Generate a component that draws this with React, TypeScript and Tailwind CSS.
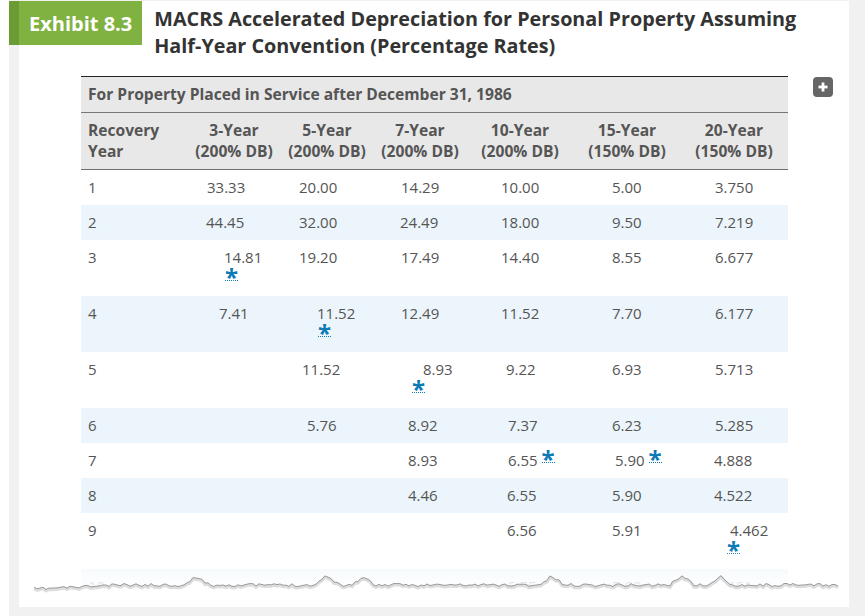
import React from 'react';

type Cell = { v?: string; c?: string; star?: 'below' | 'inline'; sc?: string };
type Row = { year: string; tall?: boolean; cells: Cell[] };

const rows: Row[] = [
    {
        year: '1',
        cells: [
            { v: '33.33', c: 'pl-[19px]' },
            { v: '20.00', c: 'pl-[19px]' },
            { v: '14.29', c: 'pl-[27px]' },
            { v: '10.00', c: 'pl-[35px]' },
            { v: '5.00', c: 'pl-[38px]' },
            { v: '3.750', c: 'pl-[35px]' },
        ],
    },
    {
        year: '2',
        cells: [
            { v: '44.45', c: 'pl-[18px]' },
            { v: '32.00', c: 'pl-[19px]' },
            { v: '24.49', c: 'pl-[26px]' },
            { v: '18.00', c: 'pl-[35px]' },
            { v: '9.50', c: 'pl-[38px]' },
            { v: '7.219', c: 'pl-[35px]' },
        ],
    },
    {
        year: '3',
        tall: true,
        cells: [
            { v: '14.81', c: 'pl-[36px]', star: 'below', sc: 'pl-[37px]' },
            { v: '19.20', c: 'pl-[19px]' },
            { v: '17.49', c: 'pl-[27px]' },
            { v: '14.40', c: 'pl-[35px]' },
            { v: '8.55', c: 'pl-[38px]' },
            { v: '6.677', c: 'pl-[35px]' },
        ],
    },
    {
        year: '4',
        tall: true,
        cells: [
            { v: '7.41', c: 'pl-[31px]' },
            { v: '11.52', c: 'pl-[37px]', star: 'below', sc: 'pl-[38px]' },
            { v: '12.49', c: 'pl-[27px]' },
            { v: '11.52', c: 'pl-[35px]' },
            { v: '7.70', c: 'pl-[38px]' },
            { v: '6.177', c: 'pl-[35px]' },
        ],
    },
    {
        year: '5',
        tall: true,
        cells: [
            {},
            { v: '11.52', c: 'pl-[22px]' },
            { v: '8.93', c: 'pl-[49px]', star: 'below', sc: 'pl-[38px]' },
            { v: '9.22', c: 'pl-[40px]' },
            { v: '6.93', c: 'pl-[38px]' },
            { v: '5.713', c: 'pl-[35px]' },
        ],
    },
    {
        year: '6',
        cells: [
            {},
            { v: '5.76', c: 'pl-[27px]' },
            { v: '8.92', c: 'pl-[34px]' },
            { v: '7.37', c: 'pl-[42px]' },
            { v: '6.23', c: 'pl-[38px]' },
            { v: '5.285', c: 'pl-[35px]' },
        ],
    },
    {
        year: '7',
        cells: [
            {},
            {},
            { v: '8.93', c: 'pl-[34px]' },
            { v: '6.55', c: 'pl-[42px]', star: 'inline' },
            { v: '5.90', c: 'pl-[41px]', star: 'inline' },
            { v: '4.888', c: 'pl-[34px]' },
        ],
    },
    {
        year: '8',
        cells: [
            {},
            {},
            { v: '4.46', c: 'pl-[34px]' },
            { v: '6.55', c: 'pl-[41px]' },
            { v: '5.90', c: 'pl-[38px]' },
            { v: '4.522', c: 'pl-[34px]' },
        ],
    },
    {
        year: '9',
        tall: true,
        cells: [
            {},
            {},
            {},
            { v: '6.56', c: 'pl-[41px]' },
            { v: '5.91', c: 'pl-[38px]' },
            { v: '4.462', c: 'pl-[50px]', star: 'below', sc: 'pl-[47px]' },
        ],
    },
    {
        year: '10',
        cells: [
            {},
            {},
            {},
            { v: '6.55', c: 'pl-[41px]' },
            { v: '5.90', c: 'pl-[38px]' },
            { v: '4.461', c: 'pl-[34px]' },
        ],
    },
];

const heads = [
    ['3-Year', '(200% DB)'],
    ['5-Year', '(200% DB)'],
    ['7-Year', '(200% DB)'],
    ['10-Year', '(200% DB)'],
    ['15-Year', '(150% DB)'],
    ['20-Year', '(150% DB)'],
];

const grid = 'grid grid-cols-[107px_92px_94px_92px_108px_106px_108px]';

// jagged "torn paper" edge, card coordinates
const tornEdge = (() => {
    let seed = 11;
    const rnd = () => {
        seed = (seed * 16807) % 2147483647;
        return seed / 2147483647;
    };
    const peaks = [
        [178, 9],
        [308, 10],
        [344, 8],
        [533, 9],
        [663, 10],
        [702, 8],
    ];
    const pts: string[] = [];
    for (let x = 15; x <= 819; x += 3) {
        let y = 24 + (rnd() - 0.5) * 3;
        if (x < 100) y += ((100 - x) / 85) * 4;
        for (const [px, h] of peaks) {
            const d = Math.abs(x - px);
            if (d < 12) y -= h * (1 - d / 12);
        }
        pts.push(`${x},${y.toFixed(1)}`);
    }
    return pts;
})();

const Star = () => (
    <span className="relative top-[2px] inline-block text-[24px] font-bold leading-[14px] text-[#0b7ab5]">
        *
        <span className="absolute bottom-[3px] left-0 right-0 border-b border-dotted border-[#0b7ab5]" />
    </span>
);

export default function App() {
    return (
        <div className="h-[616px] w-[865px] bg-white pl-[9px] font-['Open_Sans',sans-serif]">
            <div className="h-full bg-[#f1f1f1] pb-[9px] pl-[10px] pr-[16px] pt-[1px]">
                <div className="relative h-[606px] bg-white">
                    {/* Title */}
                    <div className="flex items-start">
                        <div className="-ml-[10px] flex h-[44px] items-center border-l-[10px] border-[#6b9b34] bg-[#7fb241] pl-[10px] pr-[10px] text-[20px] font-bold leading-[27px] text-white">
                            Exhibit 8.3
                        </div>
                        <h2 className="ml-[12px] mt-[5px] whitespace-nowrap text-[19.8px] font-bold leading-[26.6px] text-[#333]">
                            MACRS Accelerated Depreciation for Personal Property Assuming
                            <br />
                            Half-Year Convention (Percentage Rates)
                        </h2>
                    </div>

                    {/* Table */}
                    <div className="ml-[62px] mt-[17px] flex items-start">
                        <div className="w-[707px] text-[#555]">
                            <div className="border-b border-t border-b-[#777] border-t-[#222] bg-[#e8e8e8] px-[7px] py-[7px] text-[15.6px] font-bold leading-[21px]">
                                For Property Placed in Service after December 31, 1986
                            </div>
                            <div className={`${grid} border-b border-[#6f6f6f] bg-[#e8e8e8] py-[7px] text-[15.6px] font-bold leading-[21px]`}>
                                <div className="pl-[7px]">
                                    Recovery
                                    <br />
                                    Year
                                </div>
                                {heads.map(([a, b]) => (
                                    <div key={a} className="text-center">
                                        {a}
                                        <br />
                                        {b}
                                    </div>
                                ))}
                            </div>
                            {rows.map((r, i) => (
                                <div
                                    key={r.year}
                                    className={`${grid} py-[7px] text-[15px] leading-[21px] ${i % 2 === 1 ? 'bg-[#ecf5fb]' : 'bg-white'}`}
                                >
                                    <div className="pl-[7px]">{r.year}</div>
                                    {r.cells.map((c, j) => (
                                        <div key={j} className="whitespace-nowrap">
                                            {c.v && (
                                                <div className={c.c}>
                                                    {c.v}
                                                    {c.star === 'inline' && (
                                                        <>
                                                            {' '}
                                                            <Star />
                                                        </>
                                                    )}
                                                </div>
                                            )}
                                            {c.star === 'below' && (
                                                <div className={c.sc}>
                                                    <Star />
                                                </div>
                                            )}
                                        </div>
                                    ))}
                                </div>
                            ))}
                        </div>
                        <button className="ml-[25px] mt-[1px] flex h-[20px] w-[20px] items-center justify-center rounded-[4px] bg-[#666]">
                            <svg width="10" height="10" viewBox="0 0 10 10">
                                <rect x="3.6" y="0.5" width="2.8" height="9" fill="#fff" />
                                <rect x="0.5" y="3.6" width="9" height="2.8" fill="#fff" />
                            </svg>
                        </button>
                    </div>

                    {/* fade + torn edge */}
                    <div className="absolute left-0 right-0 top-[548px] h-[40px] bg-linear-to-b from-white/0 via-white/60 to-white/95" />
                    <svg className="absolute left-0 top-[560px]" width="830" height="46" viewBox="0 0 830 46">
                        <polygon points={`0,${tornEdge[0].split(',')[1]} ${tornEdge.join(' ')} 830,24 830,46 0,46`} fill="#fff" />
                        <polyline points={tornEdge.join(' ')} fill="none" stroke="#ddd" strokeWidth="3" transform="translate(0 1.5)" />
                        <polyline points={tornEdge.join(' ')} fill="none" stroke="#9a9a9a" strokeWidth="1" />
                    </svg>
                </div>
            </div>
        </div>
    );
}
